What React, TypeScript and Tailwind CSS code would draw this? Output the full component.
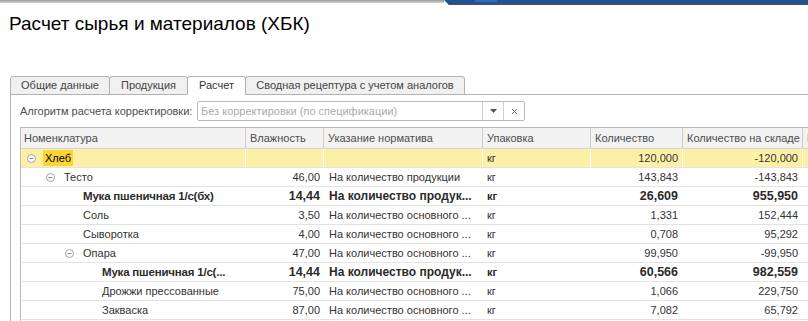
import { Fragment } from "react";

type Row = {
  name: string;
  level: number;
  group?: boolean;
  bold?: boolean;
  current?: boolean;
  wet: string;
  norm: string;
  pack: string;
  qty: string;
  stock: string;
};

const rows: Row[] = [
  { name: "Хлеб", level: 0, group: true, current: true, wet: "", norm: "", pack: "кг", qty: "120,000", stock: "-120,000" },
  { name: "Тесто", level: 1, group: true, wet: "46,00", norm: "На количество продукции", pack: "кг", qty: "143,843", stock: "-143,843" },
  { name: "Мука пшеничная 1/с(бх)", level: 2, bold: true, wet: "14,44", norm: "На количество продук...", pack: "кг", qty: "26,609", stock: "955,950" },
  { name: "Соль", level: 2, wet: "3,50", norm: "На количество основного ...", pack: "кг", qty: "1,331", stock: "152,444" },
  { name: "Сыворотка", level: 2, wet: "4,00", norm: "На количество основного ...", pack: "кг", qty: "0,708", stock: "95,292" },
  { name: "Опара", level: 2, group: true, wet: "47,00", norm: "На количество основного ...", pack: "кг", qty: "99,950", stock: "-99,950" },
  { name: "Мука пшеничная 1/с(...", level: 3, bold: true, wet: "14,44", norm: "На количество продук...", pack: "кг", qty: "60,566", stock: "982,559" },
  { name: "Дрожжи прессованные", level: 3, wet: "75,00", norm: "На количество основного ...", pack: "кг", qty: "1,066", stock: "229,750" },
  { name: "Закваска", level: 3, wet: "87,00", norm: "На количество основного ...", pack: "кг", qty: "7,082", stock: "65,792" },
  { name: "", level: 0, wet: "", norm: "", pack: "", qty: "", stock: "" },
];

const groupIndent = ["pl-[6px]", "pl-[25px]", "pl-[44px]", "pl-[63px]"];
const leafIndent = ["pl-[24px]", "pl-[43px]", "pl-[62px]", "pl-[81px]"];

const grid = "grid grid-cols-[225px_78px_159px_108px_92px_120px_120px]";

const tabs = ["Общие данные", "Продукция", "Расчет", "Сводная рецептура с учетом аналогов"];
const tabWidth = ["w-[100px]", "w-[79px]", "w-[59px]", "w-[220px]"];

const headers = ["Номенклатура", "Влажность", "Указание норматива", "Упаковка", "Количество", "Количество на складе", "К"];

const TreeMinus = () => (
  <svg width="9" height="9" viewBox="0 0 9 9" className="shrink-0">
    <circle cx="4.5" cy="4.5" r="4" fill="white" stroke="#a3a3a3" strokeWidth="1" />
    <line x1="2.5" y1="4.5" x2="6.5" y2="4.5" stroke="#8a8a8a" strokeWidth="1" />
  </svg>
);

export default function App() {
  return (
    <div className="w-[808px] h-[321px] overflow-hidden bg-white font-['Liberation_Sans',Arial,sans-serif] text-[#333]">
      {/* window chrome strip */}
      <div className="flex h-[5px]">
        <div className="flex-1 h-[3px] bg-gradient-to-b from-[#9b9b9b] to-[#d2d2d2]" />
        <div className="w-[364px] h-[5px] bg-[#24528f] border-b border-[#43536b] [clip-path:polygon(0_0,100%_0,100%_100%,5px_100%)]">
          <div className="ml-[31px] w-[22px] h-[2px] bg-[#2f6cc0]" />
        </div>
      </div>

      <h1 className="mt-[8px] pl-[9px] text-[19px] leading-[22px] text-black">Расчет сырья и материалов (ХБК)</h1>

      {/* tabs */}
      <div className="mt-[41px] ml-[10px] flex relative z-10">
        {tabs.map((t, i) => (
          <div
            key={t}
            className={`${tabWidth[i]} ${i > 0 ? "-ml-px" : ""} h-[19px] flex items-center justify-center rounded-t-[3px] border border-[#b2b2b2] text-[11px] ${
              i === 2 ? "bg-white border-b-white text-[#333]" : "bg-[#f0f0f0] text-[#444]"
            }`}
          >
            {t}
          </div>
        ))}
      </div>

      {/* tab panel */}
      <div className="-mt-px ml-[10px] border-l border-t border-[#b2b2b2] h-[300px]">
        <div className="pt-[6px] pl-[9px] flex items-center h-[26px]">
          <div className="w-[177px] text-[11px] text-[#4d4d4d]">Алгоритм расчета корректировки:</div>
          <div className="w-[328px] h-[20px] flex border border-[#b9b9b9] rounded-[2px] bg-white">
            <div className="flex-1 flex items-center pl-[3px] text-[11px] text-[#ababab]">Без корректировки (по спецификации)</div>
            <div className="w-[21px] border-l border-[#cfcfcf] flex items-center justify-center">
              <svg width="7" height="4" viewBox="0 0 7 4">
                <path d="M0 0 L7 0 L3.5 4 Z" fill="#555" />
              </svg>
            </div>
            <div className="w-[21px] border-l border-[#cfcfcf] flex items-center justify-center">
              <svg width="7" height="7" viewBox="0 0 7 7">
                <path d="M1 1 L6 6 M6 1 L1 6" stroke="#666" strokeWidth="1" />
              </svg>
            </div>
          </div>
        </div>

        {/* table */}
        <div className="mt-[6px] ml-[9px] border-l border-t border-[#b9b9b9]">
          <div className={`${grid} h-[21px] bg-[#f2f2f2] border-b border-[#d4d4d4]`}>
            {headers.map((h, i) => (
              <div
                key={h}
                className={`flex items-center whitespace-nowrap overflow-hidden border-r border-[#cdcdcd] text-[11px] text-[#4d4d4d] ${i === 0 ? "pl-[3px]" : "pl-[4px]"}`}
              >
                {h}
              </div>
            ))}
          </div>

          {rows.map((r, idx) => {
            const plain = "text-[11px]";
            const nameCls = r.bold ? "font-bold text-[11.5px] tracking-[-0.2px] text-[#2b2b2b]" : plain;
            const numCls = r.bold ? "font-bold text-[12.5px] text-[#2b2b2b]" : plain;
            const normCls = r.bold ? "font-bold text-[12px] text-[#2b2b2b]" : plain;
            const packCls = r.bold ? "font-bold text-[11px] text-[#2b2b2b]" : plain;
            const sep = r.current ? "border-r border-white" : "border-r border-transparent";
            return (
              <div
                key={idx}
                className={`${grid} h-[19px] border-b border-[#e3e3e3] ${r.current ? "bg-[#fcf0a6]" : "bg-white"}`}
              >
                <Fragment>
                  <div className={`${sep} flex items-center whitespace-nowrap ${r.group ? groupIndent[r.level] : leafIndent[r.level]} ${nameCls}`}>
                    {r.group ? (
                      <>
                        <TreeMinus />
                        {r.current ? (
                          <span className="ml-[7px] px-[2px] h-[16px] flex items-center bg-[#fcd535] text-black">{r.name}</span>
                        ) : (
                          <span className="ml-[9px]">{r.name}</span>
                        )}
                      </>
                    ) : (
                      <span>{r.name}</span>
                    )}
                  </div>
                  <div className={`${sep} flex items-center justify-end pr-[3px] ${numCls}`}>{r.wet}</div>
                  <div className={`${sep} flex items-center whitespace-nowrap pl-[5px] ${normCls}`}>{r.norm}</div>
                  <div className={`${sep} flex items-center pl-[4px] ${packCls}`}>{r.pack}</div>
                  <div className={`${sep} flex items-center justify-end pr-[4px] ${numCls}`}>{r.qty}</div>
                  <div className={`${sep} flex items-center justify-end pr-[4px] ${numCls}`}>{r.stock}</div>
                  <div className={`${sep}`} />
                </Fragment>
              </div>
            );
          })}
        </div>
      </div>
    </div>
  );
}
